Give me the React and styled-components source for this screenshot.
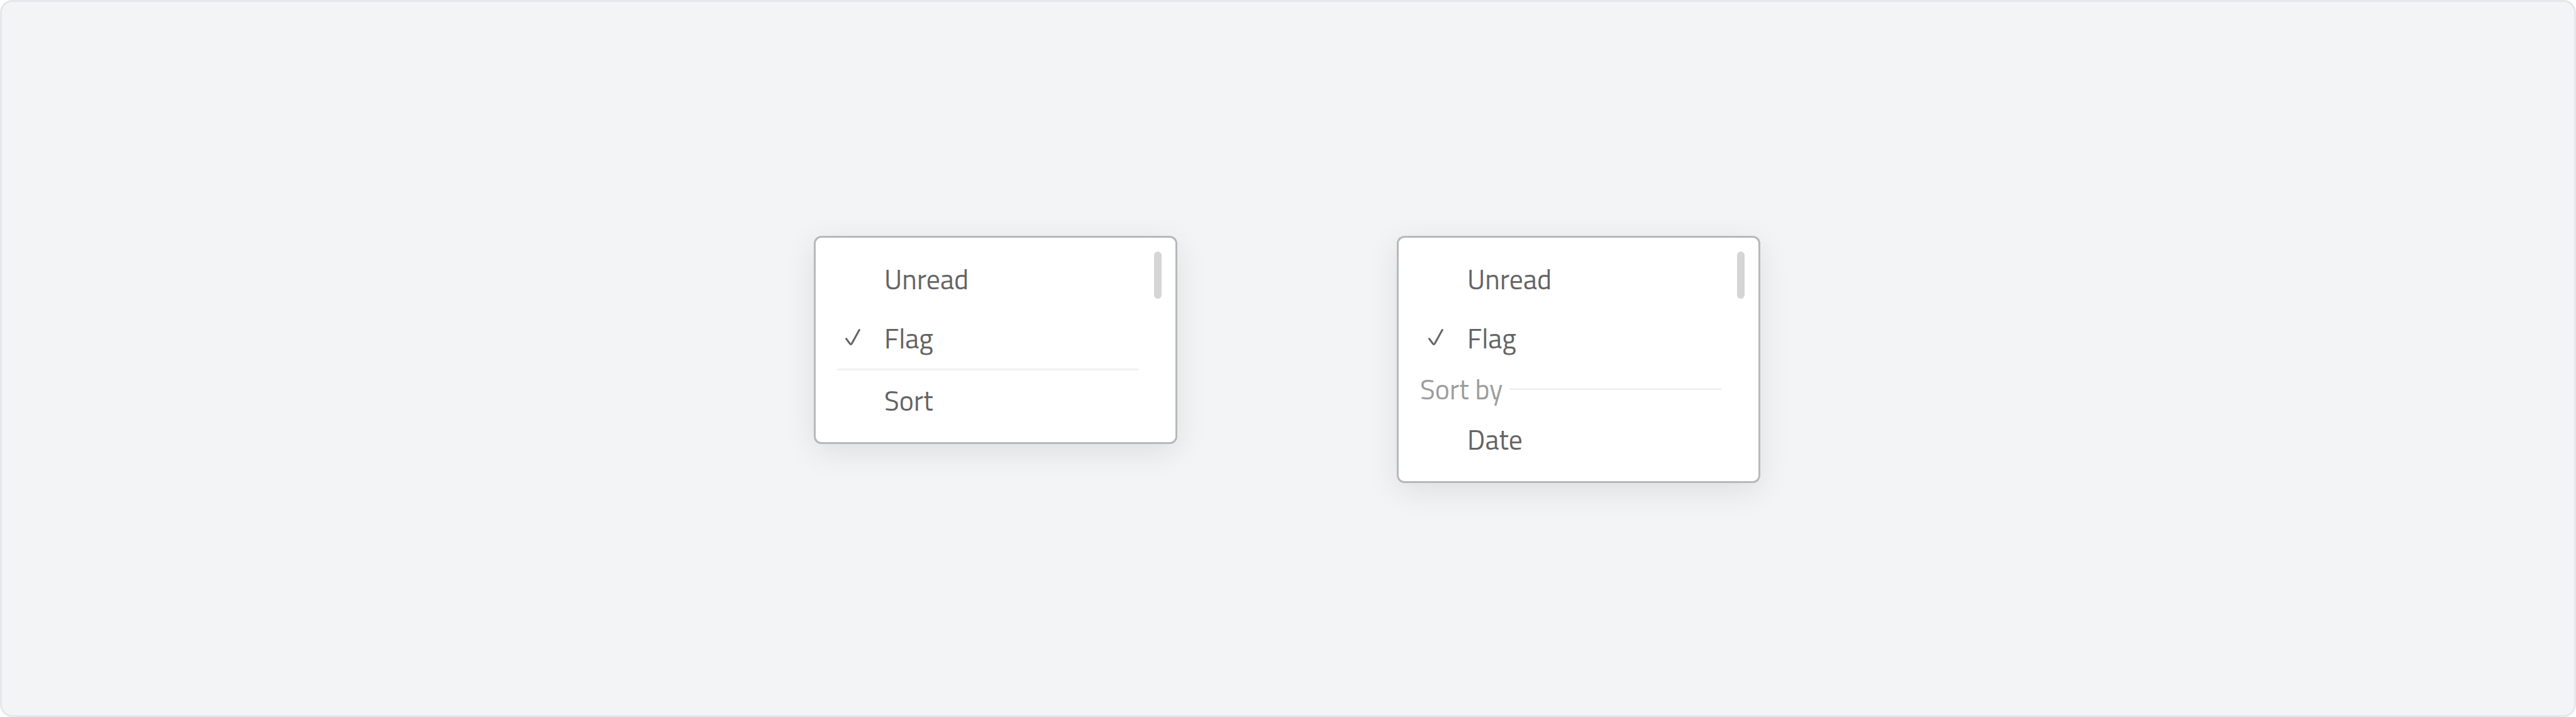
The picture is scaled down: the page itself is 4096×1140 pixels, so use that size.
import React from "react";
import styled, { createGlobalStyle } from "styled-components";

const GlobalStyle = createGlobalStyle`
  *, *::before, *::after { box-sizing: border-box; }
  body {
    margin: 0;
    background: #ffffff;
    font-family: "Titillium Web", Roboto, "Open Sans", sans-serif;
  }
`;

const Stage = styled.main`
  display: flex;
  justify-content: center;
  align-items: flex-start;
  gap: 349px;
  min-height: 100vh;
  padding: 372px 51px 48px 48px;
  background: #f3f4f6;
  border: 3px solid #e5e7eb;
  border-radius: 20px;
`;

const Panel = styled.section`
  display: flex;
  align-items: flex-start;
  gap: 25px;
  width: 578px;
  padding: 0 22px 0 34px;
  background: #ffffff;
  border: 3px solid #b8b8b8;
  border-radius: 12px;
  box-shadow: 0 12px 50px rgba(0, 0, 0, 0.09);
`;

const Menu = styled.ul`
  flex: 1;
  margin: 0;
  padding: 19px 0;
  list-style: none;
`;

const ScrollThumb = styled.div`
  width: 12px;
  height: 75px;
  margin-top: 22px;
  border-radius: 6px;
  background: #d5d5d5;
`;

const Item = styled.button`
  display: grid;
  grid-template-columns: 62px 1fr;
  align-items: center;
  width: 100%;
  height: 94px;
  padding: 0 0 0 13px;
  border: 0;
  background: none;
  color: #646464;
  font-family: inherit;
  font-size: 44px;
  font-weight: 400;
  line-height: 48px;
  text-align: left;
  cursor: pointer;
`;

const Slot = styled.span`
  display: flex;
`;

const Divider = styled.li`
  height: 3px;
  margin: 1px 0;
  background: #f0f0f0;
`;

const GroupHeader = styled.li`
  display: flex;
  align-items: center;
  gap: 12px;
  height: 67px;
  color: #9c9c9c;
  font-size: 44px;
  font-weight: 400;
  line-height: 48px;

  &::after {
    content: "";
    flex: 1;
    height: 3px;
    background: #f0f0f0;
  }
`;

function CheckIcon() {
  return (
    <svg width="24" height="30" viewBox="0 0 24 30" fill="none" aria-hidden="true">
      <path
        d="M1.6 15.6 L7.5 23.6 Q9 25.4 10.4 23.2 L22.4 1.6"
        stroke="currentColor"
        strokeWidth="3"
        strokeLinecap="round"
        strokeLinejoin="round"
      />
    </svg>
  );
}

function MenuItem({ label, checked = false }) {
  return (
    <li role="none">
      <Item type="button" role="menuitemcheckbox" aria-checked={checked}>
        <Slot>{checked && <CheckIcon />}</Slot>
        <span>{label}</span>
      </Item>
    </li>
  );
}

function MenuPanel({ label, children }) {
  return (
    <Panel>
      <Menu role="menu" aria-label={label}>{children}</Menu>
      <ScrollThumb />
    </Panel>
  );
}

export default function App() {
  return (
    <>
      <GlobalStyle />
      <Stage>
        <MenuPanel label="Filter">
          <MenuItem label="Unread" />
          <MenuItem label="Flag" checked />
          <Divider role="separator" />
          <MenuItem label="Sort" />
        </MenuPanel>
        <MenuPanel label="Filter and sort">
          <MenuItem label="Unread" />
          <MenuItem label="Flag" checked />
          <GroupHeader role="presentation">Sort by</GroupHeader>
          <MenuItem label="Date" />
        </MenuPanel>
      </Stage>
    </>
  );
}
